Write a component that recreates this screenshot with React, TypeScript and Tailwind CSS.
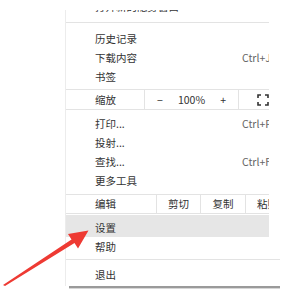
import React from "react";

const font = { fontFamily: '"Noto Sans CJK SC", "Noto Sans", sans-serif' };

function Row({ label, shortcut, h = "h-[19px]" }: { label: string; shortcut?: string; h?: string }) {
  return (
    <div className={`flex items-center ${h} pl-[29px] whitespace-nowrap`}>
      <div className="w-[147px] shrink-0 text-[10.5px] text-[#333]">{label}</div>
      {shortcut && <div className="shrink-0 text-[10.5px] text-[#666]">{shortcut}</div>}
    </div>
  );
}

function Sep() {
  return <div className="h-px bg-[#e3e3e3]" />;
}

export default function App() {
  return (
    <div className="relative w-[293px] h-[301px] bg-white overflow-hidden" style={font}>
      <div className="pt-[10px] pl-[65px]">
        <div className="w-[215px] border-l border-[#ececec] bg-white">
          <div className="w-[203px] overflow-hidden">
            <div className="h-[12px] overflow-hidden">
              <div className="-mt-[13px]">
                <Row label="打开新的隐身窗口" />
              </div>
            </div>
            <Sep />
            <div className="pt-[6px] pb-[3px]">
              <Row label="历史记录" />
              <Row label="下载内容" shortcut="Ctrl+J" />
              <Row label="书签" />
            </div>
            <Sep />
            <div className="flex h-[19px] items-stretch pl-[29px] whitespace-nowrap text-[10.5px] text-[#333]">
              <div className="w-[49px] shrink-0 flex items-center">缩放</div>
              <div className="w-[94px] shrink-0 border-l border-[#e3e3e3] flex items-center justify-between px-[12px]">
                <span>−</span>
                <span>100%</span>
                <span>+</span>
              </div>
              <div className="shrink-0 w-[40px] border-l border-[#e3e3e3] flex items-center pl-[18px]">
                <svg width="12" height="12" viewBox="0 0 12 12" fill="none" stroke="#333" strokeWidth="1.6">
                  <path d="M1 4V1H4M8 1H11V4M11 8V11H8M4 11H1V8" />
                </svg>
              </div>
            </div>
            <Sep />
            <div className="pt-[4px] pb-[4px]">
              <Row label="打印..." shortcut="Ctrl+P" />
              <Row label="投射..." />
              <Row label="查找..." shortcut="Ctrl+F" />
              <Row label="更多工具" />
            </div>
            <Sep />
            <div className="flex h-[18px] items-stretch pl-[29px] whitespace-nowrap text-[10.5px] text-[#333]">
              <div className="w-[61px] shrink-0 flex items-center">编辑</div>
              <div className="w-[44px] shrink-0 border-l border-[#e3e3e3] flex items-center justify-center">剪切</div>
              <div className="w-[45px] shrink-0 border-l border-[#e3e3e3] flex items-center justify-center">复制</div>
              <div className="w-[44px] shrink-0 border-l border-[#e3e3e3] flex items-center justify-center">粘贴</div>
            </div>
            <Sep />
            <div className="pt-[1px] pb-[2px]">
              <div className="bg-[#e6e6e6]">
                <Row label="设置" h="h-[22px] pt-[3px]" />
              </div>
              <Row label="帮助" h="h-[20px]" />
            </div>
          </div>
          <Sep />
          <div className="pt-[5px] pb-[2px]">
            <Row label="退出" />
          </div>
        </div>
        <div className="ml-[4px] w-[211px] h-[2px] bg-[#9a9a9a]" />
        <div className="ml-[4px] w-[211px] h-px bg-[#d6d6d6]" />
      </div>
      <svg className="absolute left-0 top-0" width="293" height="301" viewBox="0 0 293 301">
        <polygon
          points="3,285 5,286 74.5,243 78,248.5 88.5,230.5 68,234 71.5,239.5"
          fill="#ee3a33"
        />
      </svg>
    </div>
  );
}
